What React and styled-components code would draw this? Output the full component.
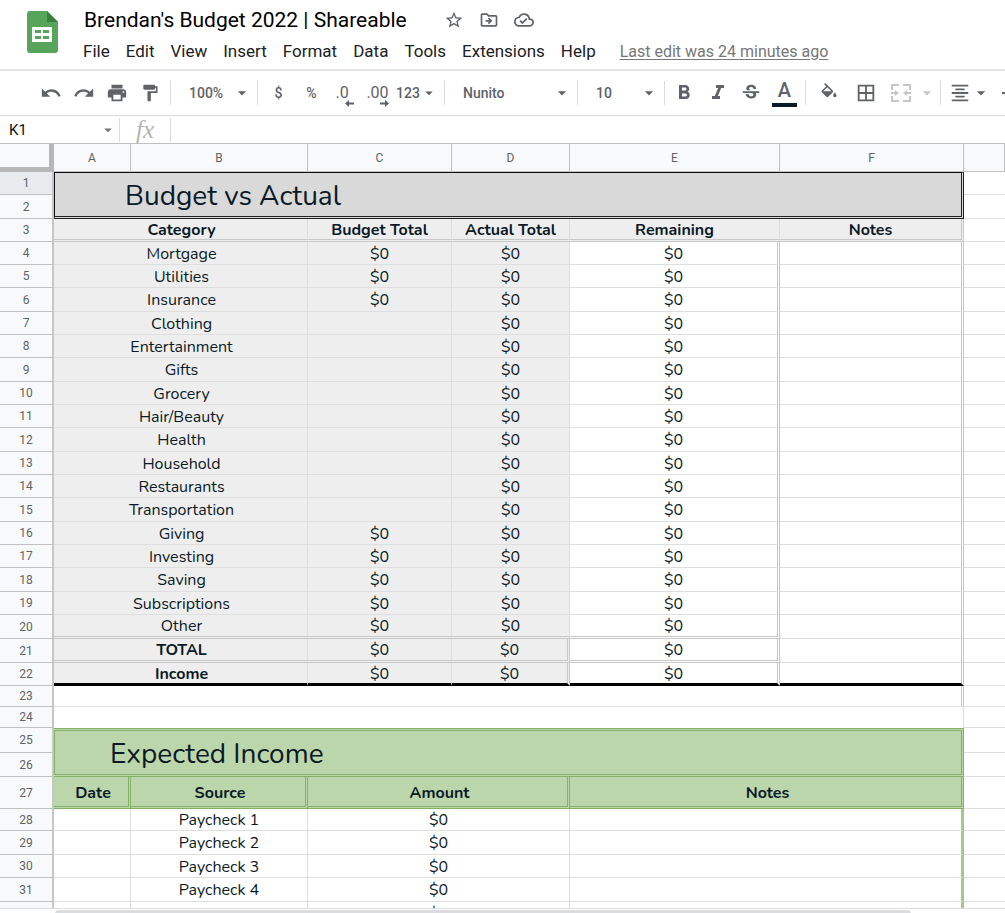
// App.jsx
import React, { useState } from 'react';
import styled, { createGlobalStyle } from 'styled-components';
import {
    MdArrowDropDown,
    MdBorderAll,
    MdFormatAlignCenter,
    MdFormatBold,
    MdFormatItalic,
    MdFormatPaint,
    MdOutlineCloudDone,
    MdOutlineDriveFileMove,
    MdPrint,
    MdRedo,
    MdStarBorder,
    MdStrikethroughS,
    MdUndo,
} from 'react-icons/md';

const GlobalStyle = createGlobalStyle`
  * {
    box-sizing: border-box;
  }

  body {
    margin: 0;
    background: #fff;
    font-family: Roboto, 'Liberation Sans', sans-serif;
  }

  button,
  input,
  select {
    margin: 0;
    padding: 0;
    border: 0;
    background: none;
    color: inherit;
    font: inherit;
  }

  svg {
    display: block;
    flex: none;
  }
`;

const Page = styled.div`
  display: flex;
  flex-direction: column;
  height: 100vh;
  overflow: hidden;
`;

const Header = styled.header`
  display: flex;
  gap: 25px;
  height: 69px;
  padding: 7px 0 0 27px;
`;

const HeaderBody = styled.div`
  flex: 1;
  white-space: nowrap;
`;

const TitleRow = styled.div`
  display: flex;
  align-items: center;
  height: 26px;
`;

const DocTitle = styled.h1`
  margin: 0 37px 0 1px;
  color: #000;
  font-family: 'Google Sans', 'Product Sans', Roboto, sans-serif;
  font-size: 21px;
  font-weight: 400;
`;

const TitleActions = styled.div`
  display: flex;
  gap: 15px;
  color: #5f6368;
`;

const Menu = styled.nav`
  display: flex;
  align-items: center;
  gap: 16px;
  height: 36px;
  color: #202124;
  font-size: 17px;
`;

const EditLink = styled.a`
  margin-left: 8px;
  color: #777;
  font-size: 16px;
  text-underline-offset: 2px;
`;

const Toolbar = styled.div`
  display: flex;
  align-items: center;
  flex: none;
  height: 47px;
  padding: 0 0 1px 34px;
  overflow: hidden;
  border-top: 2px solid #e4e4e4;
  border-bottom: 1px solid #dadce0;
  color: #5f6368;
  font-size: 14px;
  font-weight: 500;
`;

const ToolButton = styled.button`
  display: flex;
  align-items: center;
  justify-content: center;
  flex: none;
  width: ${(props) => props.$width || 33}px;
  height: 36px;
  color: ${(props) => (props.$muted ? '#c4c6c8' : 'inherit')};
`;

const Decimal = styled.span`
  display: flex;
  flex-direction: column;
  min-width: 18px;
  padding-top: 6px;
  font-size: 16px;
  font-weight: 400;
  line-height: 15px;
  text-align: left;

  svg {
    align-self: flex-end;
  }
`;

const TextColor = styled.span`
  width: 25px;
  padding-bottom: 2px;
  border-bottom: 4px solid #0b1a26;
  font-size: 20px;
  line-height: 22px;
`;

const Divider = styled.span`
  flex: none;
  width: 1px;
  height: 24px;
  margin: 0 ${(props) => (props.$tight ? 0 : 4)}px 0 ${(props) => (props.$after ? 4 : 0)}px;
  background: #dadce0;
`;

const Combo = styled.label`
  display: grid;
  flex: none;
  align-items: center;
  width: ${(props) => props.$width}px;

  select,
  svg {
    grid-area: 1 / 1;
  }

  select {
    width: 100%;
    padding-left: 18px;
    appearance: none;
    outline: none;
  }

  svg {
    justify-self: end;
    margin-right: 5px;
    pointer-events: none;
  }
`;

const FormulaBar = styled.div`
  display: flex;
  align-items: center;
  flex: none;
  height: 27px;
  color: #111;
  font-size: 15px;
`;

const NameBox = styled.label`
  display: flex;
  align-items: center;
  width: 119px;
  padding: 0 2px 0 9px;
  color: #777;

  input {
    flex: 1;
    min-width: 0;
    color: #111;
    outline: none;
  }
`;

const Fx = styled.span`
  width: 50px;
  color: #b4b4b4;
  font-family: 'Liberation Serif', serif;
  font-size: 25px;
  font-style: italic;
  line-height: 24px;
  text-align: center;
`;

const FormulaInput = styled.input`
  flex: 1;
  outline: none;
`;

const Sheet = styled.main`
  flex: 1;
  min-height: 0;
  overflow: hidden;
  border-top: 1px solid #c0c0c0;
`;

const Grid = styled.table`
  width: 100%;
  border-collapse: separate;
  border-spacing: 0;
  table-layout: fixed;
  color: #0b1a26;
  font-family: Nunito, Lato, sans-serif;
  font-size: 16px;
  line-height: 18px;
`;

const Col = styled.col`
  width: ${(props) => (props.$width ? `${props.$width}px` : 'auto')};
`;

const Row = styled.tr`
  height: ${(props) => props.$height}px;
`;

const HeadCell = styled.th`
  padding: 0;
  border-right: 1px solid #c0c0c0;
  border-bottom: 1px solid #c0c0c0;
  background: ${(props) => (props.$selected ? '#e8eaed' : '#f8f9fa')};
  color: #5f6368;
  font-family: Roboto, sans-serif;
  font-size: 12px;
  font-weight: 400;
  line-height: 16px;
`;

const RowHead = styled(HeadCell)`
  border-right: 2px solid #c6c6c6;
`;

const Corner = styled.td`
  padding: 0;
  border-right: 5px solid #b7b7b7;
  border-bottom: 5px solid #b7b7b7;
  background: #f8f9fa;
`;

const fills = { gray: '#eee', white: '#fff' };

const lines = {
    none: '0',
    thin: '1px solid #dedede',
    double: '3px double #c8c8c8',
    thick: '3px solid #000',
    greenBar: '3px solid #a3c68b',
};

const Cell = styled.td`
  padding: 1px 0 0;
  border-right: ${(props) => lines[props.$right || 'thin']};
  border-bottom: ${(props) => lines[props.$bottom || 'thin']};
  background: ${(props) => fills[props.$fill || 'white']};
  font-weight: ${(props) => (props.$bold ? 700 : 400)};
  text-align: center;
  white-space: nowrap;
`;

const CategoryCell = styled(Cell)`
  padding-left: 2px;
`;

const IncomeHead = styled.td`
  padding: 2px 0 0 4px;
  border-right: 3px double #84b067;
  border-bottom: 3px double #84b067;
  background: #bcd6ac;
  font-weight: 700;
  text-align: center;
`;

const BudgetTitle = styled.td`
  padding: 2px 0 0 70px;
  border: 1px solid #111;
  border-right: 3px double #222;
  border-bottom: 3px double #222;
  background: #d9d9d9;
  font-size: 28px;
  line-height: 34px;
`;

const IncomeTitle = styled(BudgetTitle)`
  padding-left: 55px;
  border: 3px double #84b067;
  border-left-width: 1px;
  background: #bcd6ac;
`;

const ScrollTrack = styled.footer`
  flex: none;
  height: 5px;
  padding: 1px 94px 0 55px;
  border-top: 1px solid #dadce0;
`;

const ScrollThumb = styled.div`
  height: 8px;
  border-radius: 4px;
  background: #dadce0;
`;

const columns = [
    { name: 'A', width: 77 },
    { name: 'B', width: 177 },
    { name: 'C', width: 144 },
    { name: 'D', width: 118 },
    { name: 'E', width: 210 },
    { name: 'F', width: 184 },
    { name: '' },
];

const menuItems = ['File', 'Edit', 'View', 'Insert', 'Format', 'Data', 'Tools', 'Extensions', 'Help'];

const budget = [
    { name: 'Mortgage', planned: '$0' },
    { name: 'Utilities', planned: '$0' },
    { name: 'Insurance', planned: '$0' },
    { name: 'Clothing' },
    { name: 'Entertainment' },
    { name: 'Gifts' },
    { name: 'Grocery' },
    { name: 'Hair/Beauty' },
    { name: 'Health' },
    { name: 'Household' },
    { name: 'Restaurants' },
    { name: 'Transportation' },
    { name: 'Giving', planned: '$0' },
    { name: 'Investing', planned: '$0' },
    { name: 'Saving', planned: '$0' },
    { name: 'Subscriptions', planned: '$0' },
    { name: 'Other', planned: '$0', bottom: 'double' },
    { name: 'TOTAL', planned: '$0', bottom: 'double', bold: true },
    { name: 'Income', planned: '$0', bottom: 'thick', bold: true },
];

const income = [
    { source: 'Paycheck 1', height: 22 },
    { source: 'Paycheck 2', height: 24 },
    { source: 'Paycheck 3', height: 23 },
    { source: 'Paycheck 4', height: 24 },
    { source: 'Side Hustle 1', height: 23 },
];

const Logo = styled.svg`
  margin-top: 4px;
`;

const SheetsLogo = () => (
    <Logo width="31" height="42" viewBox="0 0 31 42" aria-hidden="true">
        <path d="M3 0h17l11 11v28a3 3 0 0 1-3 3H3a3 3 0 0 1-3-3V3a3 3 0 0 1 3-3z" fill="#57a55a" />
        <path d="M20 0l11 11H20z" fill="#3b7f3e" />
        <path
            d="M5 16h20v15H5zM8 19v3h6v-3zM16 19v3h6v-3zM8 25v3h6v-3zM16 25v3h6v-3z"
            fill="#fff"
            fillRule="evenodd"
        />
    </Logo>
);

const ShortArrow = ({ right }) => (
    <svg width="9" height="7" viewBox="0 0 9 7" aria-hidden="true">
        <path
            d={right ? 'M0 2.6h5V0l4 3.5L5 7V4.4H0z' : 'M9 2.6H4V0L0 3.5 4 7V4.4h5z'}
            fill="currentColor"
        />
    </svg>
);

const FillIcon = () => (
    <svg width="20" height="20" viewBox="0 0 24 24" fill="currentColor" aria-hidden="true">
        <path d="M16.56 8.94L7.62 0 6.21 1.41l2.38 2.38-5.15 5.15c-.59.59-.59 1.54 0 2.12l5.5 5.5c.29.29.68.44 1.06.44s.77-.15 1.06-.44l5.5-5.5c.59-.58.59-1.53 0-2.12zM5.21 10L10 5.21 14.79 10H5.21zM19 11.5s-2 2.17-2 3.5c0 1.1.9 2 2 2s2-.9 2-2c0-1.33-2-3.5-2-3.5z" />
    </svg>
);

const MergeIcon = () => (
    <svg width="20" height="18" viewBox="0 0 20 18" aria-hidden="true">
        <path
            d="M1 6V1h7M12 1h7v5M1 12v5h7M12 17h7v-5"
            fill="none"
            stroke="currentColor"
            strokeWidth="2"
        />
        <path d="M0 8h4V6l4 3-4 3v-2H0zM20 8h-4V6l-4 3 4 3v-2h4z" fill="currentColor" />
    </svg>
);

const VerticalAlignIcon = () => (
    <svg width="20" height="20" viewBox="0 0 20 20" aria-hidden="true">
        <path d="M0 9h20v2H0zM9 0h2v4h3l-4 4-4-4h3zM9 20h2v-4h3l-4-4-4 4h3z" fill="currentColor" />
    </svg>
);

const rowHeight = (number) => (number % 3 === 0 || number === 20 ? 24 : 23);

const BudgetRow = ({ number, item }) => {
    const bottom = item.bottom || 'thin';
    const summary = Boolean(item.bold);

    return (
        <Row $height={rowHeight(number)}>
            <RowHead scope="row">{number}</RowHead>
            <CategoryCell colSpan={2} $fill="gray" $bottom={bottom} $bold={summary}>{item.name}</CategoryCell>
            <Cell $fill="gray" $bottom={bottom}>{item.planned}</Cell>
            <Cell $fill="gray" $bottom={bottom} $right={summary ? 'double' : 'thin'}>$0</Cell>
            <Cell $bottom={bottom} $right="double">$0</Cell>
            <Cell $bottom={bottom === 'thick' ? 'thick' : 'thin'} $right="double" />
            <Cell $right="none" />
        </Row>
    );
};

const App = () => {
    const [cellName, setCellName] = useState('K1');
    const [formula, setFormula] = useState('');

    return (
        <Page>
            <GlobalStyle />
            <Header>
                <SheetsLogo />
                <HeaderBody>
                    <TitleRow>
                        <DocTitle>Brendan's Budget 2022 | Shareable</DocTitle>
                        <TitleActions>
                            <button type="button" aria-label="Star"><MdStarBorder size={20} /></button>
                            <button type="button" aria-label="Move"><MdOutlineDriveFileMove size={20} /></button>
                            <button type="button" aria-label="Document status"><MdOutlineCloudDone size={20} /></button>
                        </TitleActions>
                    </TitleRow>
                    <Menu>
                        {menuItems.map((item) => (
                            <button type="button" key={item}>{item}</button>
                        ))}
                        <EditLink href="#history">Last edit was 24 minutes ago</EditLink>
                    </Menu>
                </HeaderBody>
            </Header>

            <Toolbar>
                <ToolButton aria-label="Undo"><MdUndo size={22} /></ToolButton>
                <ToolButton aria-label="Redo"><MdRedo size={22} /></ToolButton>
                <ToolButton aria-label="Print"><MdPrint size={22} /></ToolButton>
                <ToolButton aria-label="Paint format"><MdFormatPaint size={20} /></ToolButton>
                <Divider $after $tight />
                <Combo $width={86}>
                    <select aria-label="Zoom"><option>100%</option></select>
                    <MdArrowDropDown size={20} />
                </Combo>
                <Divider />
                <ToolButton>$</ToolButton>
                <ToolButton>%</ToolButton>
                <ToolButton aria-label="Decrease decimal places">
                    <Decimal>.0<ShortArrow /></Decimal>
                </ToolButton>
                <ToolButton aria-label="Increase decimal places">
                    <Decimal>.00<ShortArrow right /></Decimal>
                </ToolButton>
                <ToolButton $width={46}>123<MdArrowDropDown size={18} /></ToolButton>
                <Divider $after $tight />
                <Combo $width={132}>
                    <select aria-label="Font"><option>Nunito</option></select>
                    <MdArrowDropDown size={20} />
                </Combo>
                <Divider $tight />
                <Combo $width={86}>
                    <select aria-label="Font size"><option>10</option></select>
                    <MdArrowDropDown size={20} />
                </Combo>
                <Divider $tight />
                <ToolButton $width={38} aria-label="Bold"><MdFormatBold size={24} /></ToolButton>
                <ToolButton $width={30} aria-label="Italic"><MdFormatItalic size={24} /></ToolButton>
                <ToolButton $width={35} aria-label="Strikethrough"><MdStrikethroughS size={22} /></ToolButton>
                <ToolButton $width={33} aria-label="Text color"><TextColor>A</TextColor></ToolButton>
                <Divider $after />
                <ToolButton $width={38} aria-label="Fill color"><FillIcon /></ToolButton>
                <ToolButton $width={35} aria-label="Borders"><MdBorderAll size={22} /></ToolButton>
                <ToolButton $width={35} $muted aria-label="Merge cells"><MergeIcon /></ToolButton>
                <ToolButton $width={18} $muted aria-label="Merge type"><MdArrowDropDown size={20} /></ToolButton>
                <Divider $after />
                <ToolButton $width={50} aria-label="Horizontal align">
                    <MdFormatAlignCenter size={22} />
                    <MdArrowDropDown size={20} />
                </ToolButton>
                <ToolButton aria-label="Vertical align"><VerticalAlignIcon /></ToolButton>
            </Toolbar>

            <FormulaBar>
                <NameBox>
                    <input aria-label="Cell" value={cellName} onChange={(e) => setCellName(e.target.value)} />
                    <MdArrowDropDown size={18} />
                </NameBox>
                <Divider $tight />
                <Fx>fx</Fx>
                <Divider />
                <FormulaInput aria-label="Formula" value={formula} onChange={(e) => setFormula(e.target.value)} />
            </FormulaBar>

            <Sheet>
                <Grid>
                    <colgroup>
                        <Col $width={54} />
                        {columns.map((column) => (
                            <Col key={column.name} $width={column.width} />
                        ))}
                    </colgroup>
                    <thead>
                        <Row $height={28}>
                            <Corner />
                            {columns.map((column) => (
                                <HeadCell key={column.name} scope="col">{column.name}</HeadCell>
                            ))}
                        </Row>
                    </thead>
                    <tbody>
                        <Row $height={23}>
                            <RowHead scope="row" $selected>1</RowHead>
                            <BudgetTitle colSpan={6} rowSpan={2}>Budget vs Actual</BudgetTitle>
                            <Cell $right="none" />
                        </Row>
                        <Row $height={24}>
                            <RowHead scope="row">2</RowHead>
                            <Cell $right="none" />
                        </Row>
                        <Row $height={23}>
                            <RowHead scope="row">3</RowHead>
                            <CategoryCell colSpan={2} $fill="gray" $bottom="double" $bold>Category</CategoryCell>
                            <Cell $fill="gray" $bottom="double" $bold>Budget Total</Cell>
                            <Cell $fill="gray" $bottom="double" $bold>Actual Total</Cell>
                            <Cell $fill="gray" $bottom="double" $bold>Remaining</Cell>
                            <Cell $fill="gray" $bottom="double" $right="double" $bold>Notes</Cell>
                            <Cell $right="none" />
                        </Row>
                        {budget.map((item, index) => (
                            <BudgetRow key={item.name} number={index + 4} item={item} />
                        ))}
                        <Row $height={21}>
                            <RowHead scope="row">23</RowHead>
                            <Cell colSpan={6} $right="double" />
                            <Cell $right="none" />
                        </Row>
                        <Row $height={21}>
                            <RowHead scope="row">24</RowHead>
                            <Cell colSpan={6} $bottom="none" />
                            <Cell $right="none" />
                        </Row>
                        <Row $height={25}>
                            <RowHead scope="row">25</RowHead>
                            <IncomeTitle colSpan={6} rowSpan={2}>Expected Income</IncomeTitle>
                            <Cell $right="none" />
                        </Row>
                        <Row $height={24}>
                            <RowHead scope="row">26</RowHead>
                            <Cell $right="none" />
                        </Row>
                        <Row $height={32}>
                            <RowHead scope="row">27</RowHead>
                            <IncomeHead>Date</IncomeHead>
                            <IncomeHead>Source</IncomeHead>
                            <IncomeHead colSpan={2}>Amount</IncomeHead>
                            <IncomeHead colSpan={2}>Notes</IncomeHead>
                            <Cell $right="none" />
                        </Row>
                        {income.map((item, index) => (
                            <Row key={item.source} $height={item.height}>
                                <RowHead scope="row">{index < 4 ? index + 28 : ''}</RowHead>
                                <Cell />
                                <Cell>{item.source}</Cell>
                                <Cell colSpan={2}>$0</Cell>
                                <Cell colSpan={2} $right="greenBar" />
                                <Cell $right="none" />
                            </Row>
                        ))}
                    </tbody>
                </Grid>
            </Sheet>
            <ScrollTrack>
                <ScrollThumb />
            </ScrollTrack>
        </Page>
    );
};

export default App;
